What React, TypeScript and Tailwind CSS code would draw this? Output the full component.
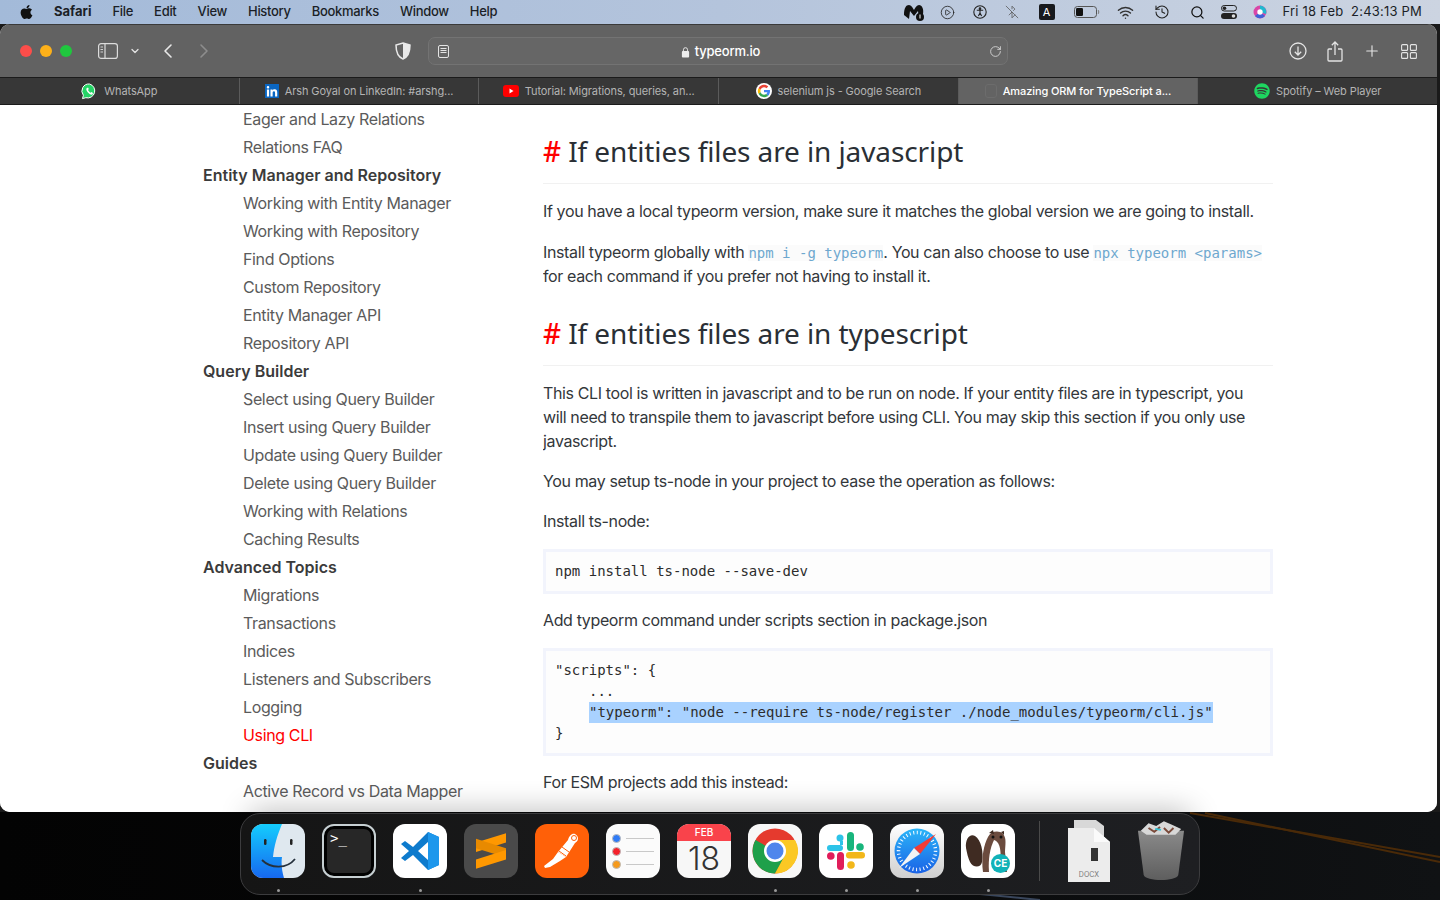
import React from 'react';
import { ChevronDown, ChevronLeft, ChevronRight, Plus, RotateCw, Search, History, BluetoothOff, CirclePlay, Wifi } from 'lucide-react';
import { FaApple, FaSpotify, FaLinkedinIn } from 'react-icons/fa';

const menuItems = ['File', 'Edit', 'View', 'History', 'Bookmarks', 'Window', 'Help'];

const sidebar: { label: string; kind: 'group' | 'item' | 'active' }[] = [
  { label: 'Eager and Lazy Relations', kind: 'item' },
  { label: 'Relations FAQ', kind: 'item' },
  { label: 'Entity Manager and Repository', kind: 'group' },
  { label: 'Working with Entity Manager', kind: 'item' },
  { label: 'Working with Repository', kind: 'item' },
  { label: 'Find Options', kind: 'item' },
  { label: 'Custom Repository', kind: 'item' },
  { label: 'Entity Manager API', kind: 'item' },
  { label: 'Repository API', kind: 'item' },
  { label: 'Query Builder', kind: 'group' },
  { label: 'Select using Query Builder', kind: 'item' },
  { label: 'Insert using Query Builder', kind: 'item' },
  { label: 'Update using Query Builder', kind: 'item' },
  { label: 'Delete using Query Builder', kind: 'item' },
  { label: 'Working with Relations', kind: 'item' },
  { label: 'Caching Results', kind: 'item' },
  { label: 'Advanced Topics', kind: 'group' },
  { label: 'Migrations', kind: 'item' },
  { label: 'Transactions', kind: 'item' },
  { label: 'Indices', kind: 'item' },
  { label: 'Listeners and Subscribers', kind: 'item' },
  { label: 'Logging', kind: 'item' },
  { label: 'Using CLI', kind: 'active' },
  { label: 'Guides', kind: 'group' },
  { label: 'Active Record vs Data Mapper', kind: 'item' },
];

const GoogleIcon = () => (
  <svg width="16" height="16" viewBox="0 0 48 48">
    <circle cx="24" cy="24" r="24" fill="#fff" />
    <path fill="#EA4335" d="M24 13c3 0 5.400 1 7.300 2.800l5.400-5.400C33.400 7.400 29.100 5.500 24 5.500c-7.300 0-13.500 4.200-16.500 10.200l6.300 4.900C15.300 16.200 19.300 13 24 13z" />
    <path fill="#4285F4" d="M42 24.500c0-1.300-.1-2.500-.3-3.700H24v7h10.100c-.4 2.300-1.700 4.300-3.700 5.600l6 4.700C40 34.900 42 30.100 42 24.500z" />
    <path fill="#FBBC05" d="M13.800 27.400c-.8-2.300-.8-4.600 0-6.800l-6.300-4.900c-2.700 5.300-2.700 11.300 0 16.600z" />
    <path fill="#34A853" d="M24 42.500c5 0 9.200-1.600 12.400-4.500l-6-4.700c-1.700 1.100-3.800 1.800-6.400 1.800-4.700 0-8.700-3.200-10.200-7.600l-6.300 4.900c3 6 9.200 10.100 16.500 10.100z" />
  </svg>
);

const WhatsAppIcon = () => (
  <svg width="17" height="17" viewBox="0 0 17 17">
    <path d="M8.500 1 A7 7 0 1 1 4.800 14.700 L1.500 15.600 L2.400 12.300 A7 7 0 0 1 8.500 1 Z" fill="#25d366" stroke="#fff" strokeWidth="1" />
    <path d="M6 5 C5 5.500 5 7 6.500 9 C8 11 10 12 11.500 11.500 L12 10 L10.500 9 L9.500 9.800 C8.500 9.300 7.500 8 7 7 L7.800 6 L7 4.500 Z" fill="#fff" />
  </svg>
);

const Tab = ({ label, icon, active }: { label: string; icon?: React.ReactNode; active?: boolean }) => (
  <div className={`flex flex-1 items-center justify-center gap-[6px] border-r border-[#5b5b5b] last:border-r-0 ${active ? 'bg-[#636363] font-medium text-white' : 'text-[#b4b4b4]'}`}>
    {icon}
    <span className="text-[11px] tracking-[-0.1px]">{label}</span>
  </div>
);

const MenuBar = () => (
  <div className="flex h-[24px] shrink-0 items-center justify-between bg-gradient-to-r from-[#a3bad9] via-[#b4c4dc] to-[#ccd4e1] pl-[19px] pr-[18px] text-[13px] text-[#1b1f27]">
    <div className="flex items-center">
      <FaApple className="h-[16px] w-[15px] text-[#111]" />
      <span className="ml-[20px] font-bold">Safari</span>
      <div className="ml-[21px] flex gap-[21px] font-medium tracking-[-0.3px]">
        {menuItems.map(m => <span key={m}>{m}</span>)}
      </div>
    </div>
    <div className="flex items-center">
      <svg width="22" height="18" viewBox="0 0 22 18" className="mr-[15px]">
        <path d="M1 12 C1 5 3 2 6 2 C8 2 10 5 11 7 C12 5 14 2 16 2 C19 2 21 6 20 11 L16 16 L15 8 L11 13 L7 8 L6 16 Z" fill="#111" />
        <circle cx="17" cy="14" r="4" fill="#111" />
        <rect x="16.500" y="11.500" width="1" height="4" fill="#fff" />
      </svg>
      <CirclePlay size={15} strokeWidth={1.3} className="mr-[18px] text-[#222]" />
      <svg width="14" height="14" viewBox="0 0 14 14" fill="none" stroke="#222" strokeWidth="1.100" className="mr-[18px]">
        <circle cx="7" cy="7" r="6.200" />
        <circle cx="7" cy="3.700" r=".8" fill="#222" />
        <path d="M3.800 5.200 H10.200 M7 5.200 V8 M7 8 L5.400 11 M7 8 L8.600 11" />
      </svg>
      <BluetoothOff size={14} strokeWidth={1.3} className="mr-[20px] text-[#555]" />
      <div className="mr-[19px] flex h-[16px] w-[16px] items-center justify-center rounded-[2px] bg-[#17191d] text-[11px] text-white">A</div>
      <svg width="26" height="12" viewBox="0 0 26 12" className="mr-[17px]">
        <rect x=".5" y=".5" width="22" height="11" rx="3" fill="none" stroke="#555" />
        <rect x="2" y="2" width="7" height="8" rx="1.200" fill="#111" />
        <path d="M24 4 C25 4.500 25 7.500 24 8" stroke="#777" fill="none" />
      </svg>
      <Wifi size={17} strokeWidth={2} className="mr-[20px] text-[#333]" />
      <History size={16} strokeWidth={1.6} className="mr-[20px] text-[#222]" />
      <Search size={15} strokeWidth={2} className="mr-[16px] text-[#111]" />
      <svg width="16" height="14" viewBox="0 0 16 14" className="mr-[16px]">
        <rect x=".5" y=".5" width="15" height="5.500" rx="2.700" fill="none" stroke="#222" />
        <circle cx="3.500" cy="3.200" r="1.800" fill="#222" />
        <rect x="0" y="8" width="16" height="6" rx="3" fill="#222" />
        <circle cx="12.500" cy="11" r="1.800" fill="#ddd" />
      </svg>
      <svg width="14" height="14" viewBox="0 0 14 14" className="mr-[16px]">
        <circle cx="7" cy="7" r="6.500" fill="#d946a8" />
        <path d="M7 .5 A6.500 6.500 0 0 1 13 9 L7 7 Z" fill="#22b8cf" />
        <path d="M2 11 A6.500 6.500 0 0 0 12 11 L7 7 Z" fill="#3f63d8" />
        <circle cx="7" cy="7" r="2.700" fill="#fff" />
      </svg>
      <span className="tracking-[0.2px]">Fri 18 Feb&nbsp;&nbsp;2:43:13 PM</span>
    </div>
  </div>
);

const Toolbar = () => (
  <div className="flex h-[53px] shrink-0 items-center border-t border-[#3a3a3a] bg-[#626262] text-[#e4e4e4]">
    <div className="ml-[20px] flex gap-[8px]">
      <span className="h-[12px] w-[12px] rounded-full bg-[#fc4d4a]" />
      <span className="h-[12px] w-[12px] rounded-full bg-[#fdb019]" />
      <span className="h-[12px] w-[12px] rounded-full bg-[#1fc73e]" />
    </div>
    <svg width="20" height="16" viewBox="0 0 20 16" fill="none" stroke="#dcdcdc" strokeWidth="1.200" className="ml-[26px]">
      <rect x=".6" y=".6" width="18.800" height="14.800" rx="2.500" />
      <path d="M7 .6 V15.400" />
      <path d="M2.500 4 H5 M2.500 6.500 H5 M2.500 9 H5" strokeWidth=".9" />
    </svg>
    <ChevronDown size={12} strokeWidth={2.5} className="ml-[11px] text-[#e4e4e4]" />
    <ChevronLeft size={24} strokeWidth={1.6} className="ml-[15px] text-[#e8e8e8]" />
    <ChevronRight size={24} strokeWidth={1.6} className="ml-[12px] text-[#8d8d8d]" />
    <svg width="16" height="18" viewBox="0 0 16 18" className="ml-[179px]">
      <path d="M8 1 L15 3 C15 10 13 15 8 17 C3 15 1 10 1 3 Z" fill="none" stroke="#e8e8e8" strokeWidth="1.500" />
      <path d="M8 1 L15 3 C15 10 13 15 8 17 Z" fill="#e8e8e8" />
    </svg>
    <div className="ml-[17px] flex h-[28px] w-[580px] items-center justify-between rounded-[7px] border border-[#737373] bg-[#666666] pl-[9px] pr-[5px]">
      <svg width="11" height="13" viewBox="0 0 11 13" fill="none" stroke="#e4e4e4" strokeWidth="1">
        <rect x=".5" y=".5" width="10" height="12" rx="1.500" />
        <path d="M2.500 3.500 H8.500 M2.500 5.500 H8.500 M2.500 7.500 H8.500" />
      </svg>
      <div className="ml-[3px] flex items-center gap-[5px] pt-[1px] text-[13px] font-medium tracking-[-0.2px] text-white">
        <svg width="9" height="12" viewBox="0 0 10 12">
          <rect x="1" y="5" width="8" height="7" rx="1" fill="#eee" />
          <path d="M2.700 5 V3.500 A2.300 2.300 0 0 1 7.300 3.500 V5" fill="none" stroke="#eee" />
        </svg>
        typeorm.io
      </div>
      <RotateCw size={13} strokeWidth={1.5} className="text-[#e0e0e0]" />
    </div>
    <div className="ml-[281px] flex items-center gap-[20px]">
      <svg width="18" height="18" viewBox="0 0 18 18" fill="none" stroke="#e4e4e4" strokeWidth="1.300">
        <circle cx="9" cy="9" r="8" />
        <path d="M9 4.500 V13 M5.800 9.800 L9 13 L12.200 9.800" />
      </svg>
      <svg width="16" height="21" viewBox="0 0 16 21" fill="none" stroke="#e4e4e4" strokeWidth="1.300">
        <path d="M5 8 H2 A1 1 0 0 0 1 9 V19 A1 1 0 0 0 2 20 H14 A1 1 0 0 0 15 19 V9 A1 1 0 0 0 14 8 H11" />
        <path d="M8 14 V1 M4.800 4.200 L8 1 L11.200 4.200" />
      </svg>
      <Plus size={18} strokeWidth={1.5} className="text-[#e4e4e4]" />
      <svg width="16" height="15" viewBox="0 0 16 15" fill="none" stroke="#e4e4e4" strokeWidth="1.100">
        <rect x=".6" y=".6" width="6" height="5.800" rx="1" />
        <rect x="9.400" y=".6" width="6" height="5.800" rx="1" />
        <rect x=".6" y="8.600" width="6" height="5.800" rx="1" />
        <rect x="9.400" y="8.600" width="6" height="5.800" rx="1" />
      </svg>
    </div>
  </div>
);

const TabBar = () => (
  <div className="flex h-[28px] shrink-0 border-y border-[#1b1b1b] bg-[#373737]">
    <Tab label="WhatsApp" icon={<WhatsAppIcon />} />
    <Tab
      label="Arsh Goyal on LinkedIn: #arshg..."
      icon={
        <span className="flex h-[14px] w-[14px] items-end justify-center bg-[#0a66c2]">
          <FaLinkedinIn size={12} className="text-white" />
        </span>
      }
    />
    <Tab
      label="Tutorial: Migrations, queries, an..."
      icon={
        <svg width="16" height="12" viewBox="0 0 16 12">
          <rect width="16" height="12" rx="3" fill="#f00" />
          <path d="M6.500 3.500 L10.500 6 L6.500 8.500 Z" fill="#fff" />
        </svg>
      }
    />
    <Tab label="selenium js - Google Search" icon={<GoogleIcon />} />
    <Tab label="Amazing ORM for TypeScript a..." active icon={<span className="h-[14px] w-[12px] rounded-[3px] border border-[#6c6c6c]" />} />
    <Tab label="Spotify – Web Player" icon={<FaSpotify size={16} className="text-[#1ed760]" />} />
  </div>
);

const Sidebar = () => (
  <div className="w-[543px] shrink-0 overflow-hidden pl-[203px] font-[Inter,sans-serif] text-[16px]">
    {sidebar.map(s => (
      <div
        key={s.label}
        className={`h-[28px] leading-[28px] ${s.kind === 'group' ? 'font-semibold text-[#3b3b3b]' : s.kind === 'active' ? 'pl-[40px] tracking-[-0.36px] text-[#f00]' : 'pl-[40px] tracking-[-0.36px] text-[#5b5b5b]'}`}
      >
        {s.label}
      </div>
    ))}
  </div>
);

const Heading = ({ children }: { children: React.ReactNode }) => (
  <h2 className="border-b border-[#f1f1f1] pb-[14px] font-['Noto_Sans',sans-serif] text-[28px] leading-[36px] tracking-[-0.1px] text-[#2a2f35]">
    <span className="font-medium text-[#f00]">#</span> {children}
  </h2>
);

const Code = ({ children }: { children: React.ReactNode }) => (
  <code className="bg-[#fbfbfb] font-['DejaVu_Sans_Mono',monospace] text-[14px] leading-none tracking-normal text-[#6ea8cf]">{children}</code>
);

const Pre = ({ children }: { children: React.ReactNode }) => (
  <pre className="mt-[16px] border-[3px] border-[#f2f4fc] bg-[#fdfdfd] px-[9px] py-[9px] font-['DejaVu_Sans_Mono',monospace] text-[14px] leading-[21px] tracking-normal text-[#2c2c2c]">{children}</pre>
);

const Article = () => (
  <div className="w-[730px] shrink-0 overflow-hidden pt-[28px] font-[Inter,sans-serif] text-[16px] leading-[24px] tracking-[-0.37px] text-[#33373b]">
    <Heading>If entities files are in javascript</Heading>
    <p className="mt-[15px]">If you have a local typeorm version, make sure it matches the global version we are going to install.</p>
    <p className="mt-[17px]">
      Install typeorm globally with <Code>npm i -g typeorm</Code>. You can also choose to use <Code>npx typeorm &lt;params&gt;</Code> for each command if you prefer not having to install it.
    </p>
    <div className="mt-[27px]">
      <Heading>If entities files are in typescript</Heading>
    </div>
    <p className="mt-[15px] pr-[20px]">
      This CLI tool is written in javascript and to be run on node. If your entity files are in typescript, you will need to transpile them to javascript before using CLI. You may skip this section if you only use javascript.
    </p>
    <p className="mt-[16px]">You may setup ts-node in your project to ease the operation as follows:</p>
    <p className="mt-[16px]">Install ts-node:</p>
    <Pre>npm install ts-node --save-dev</Pre>
    <p className="mt-[14px]">Add typeorm command under scripts section in package.json</p>
    <Pre>
      <div>{'"scripts": {'}</div>
      <div className="pl-[34px]">...</div>
      <div className="pl-[34px]">
        <span className="inline-block bg-[#a9d2ff]">{'"typeorm": "node --require ts-node/register ./node_modules/typeorm/cli.js"'}</span>
      </div>
      <div>{'}'}</div>
    </Pre>
    <p className="mt-[14px]">For ESM projects add this instead:</p>
  </div>
);

const tile = 'flex h-[54px] w-[54px] shrink-0 items-center justify-center overflow-hidden rounded-[12px]';

const Dock = () => (
  <div className="relative flex h-[88px] shrink-0 justify-center bg-gradient-to-r from-[#030303] via-[#08090a] to-[#101214] pt-[1px]">
    {/* wallpaper streaks */}
    <svg className="absolute inset-0" width="1440" height="88" viewBox="0 0 1440 88" fill="none">
      <path d="M1190 1 L1440 45" stroke="#4a2a08" strokeWidth="2" />
      <path d="M1205 1 L1440 50" stroke="#4a2a08" strokeWidth="2" />
      <path d="M980 82 L1040 88" stroke="#39465c" strokeWidth="2" />
    </svg>
    <div className="relative flex h-[82px] w-[960px] items-center rounded-[20px] border border-[#3c3c3e] bg-gradient-to-r from-[#151515] to-[#1e1f22] pb-[6px] pl-[10px]">
      <div className="flex gap-[17px]">
        <svg width="54" height="54" viewBox="0 0 54 54">
          <defs>
            <linearGradient id="fb" x1="0" y1="0" x2="0" y2="1"><stop offset="0" stopColor="#14cdfd" /><stop offset="1" stopColor="#1668f0" /></linearGradient>
          </defs>
          <rect width="54" height="54" rx="12" fill="#dfe8ef" />
          <path d="M12 0 H31 C26 12 23 22 22 33 H31 C30 40 31 47 33 54 H12 A12 12 0 0 1 0 42 V12 A12 12 0 0 1 12 0 Z" fill="url(#fb)" />
          <rect x="13" y="15" width="2.500" height="6" rx="1.200" fill="#222" />
          <rect x="39" y="15" width="2.500" height="6" rx="1.200" fill="#222" />
          <path d="M11 36 C20 45 36 45 44 35" fill="none" stroke="#25303c" strokeWidth="1.800" />
        </svg>
        <div className={`${tile} border-[2px] border-[#c6cfd2] bg-black p-[3px]`}>
          <div className="h-full w-full rounded-[7px] bg-[#272727] pl-[3px] pt-[2px] font-['DejaVu_Sans_Mono',monospace] text-[14px] leading-[14px] text-white">&gt;_</div>
        </div>
        <div className={`${tile} bg-white`}>
          <svg width="40" height="40" viewBox="0 0 40 40">
            <path d="M28 1 L39 6 V34 L28 39 L13 24 L5 30 L1 27 L9 20 L1 13 L5 10 L13 16 Z M28 11 L18 20 L28 29 Z" fill="#0e7bcd" fillRule="evenodd" />
            <path d="M28 1 L39 6 V34 L28 39 Z" fill="#1d97ec" />
          </svg>
        </div>
        <div className={`${tile} bg-[#4a4a4a]`}>
          <svg width="30" height="38" viewBox="0 0 32 38">
            <path d="M32 0 V10 L0 20 V10 Z" fill="#ff9800" />
            <path d="M0 16 L32 26 V16 L0 6 Z" fill="#e88a00" />
            <path d="M32 18 V28 L0 38 V28 Z" fill="#ff9800" />
          </svg>
        </div>
        <div className={`${tile} bg-[#ff6008]`}>
          <svg width="40" height="40" viewBox="0 0 40 40">
            <path d="M33 3 C37 5 37 10 33 12 L24 26 L16 21 L26 9 C27 5 30 2 33 3 Z" fill="#fff" />
            <path d="M16 21 L24 26 L18 30 L8 36 L3 37 L2 35 L11 28 Z" fill="#fff" />
            <path d="M20 16 L27 21 M17 20 L24 25" stroke="#ff6008" strokeWidth="1" />
            <circle cx="32" cy="7" r="2.500" fill="none" stroke="#ff6008" strokeWidth="1" />
          </svg>
        </div>
        <div className={`${tile} flex-col gap-[4px] bg-[#fbfbfb]`}>
          {['#2f7bf6', '#f5212b', '#f59a1c'].map(c => (
            <div key={c} className="flex items-center gap-[5px]">
              <div className="flex h-[9px] w-[9px] items-center justify-center rounded-full border border-[#bbb]" style={{ backgroundColor: c }} />
              <div className="h-[1px] w-[28px] bg-[#c9c9c9]" />
            </div>
          ))}
        </div>
        <div className={`${tile} flex-col justify-start bg-[#f7f7f7]`}>
          <div className="flex h-[17px] w-full shrink-0 items-center justify-center bg-[#f9434b] font-[Inter,sans-serif] text-[10px] font-medium text-white">FEB</div>
          <div className="font-[Inter,sans-serif] text-[32px] font-light leading-[36px] text-[#333]">18</div>
        </div>
        <div className={`${tile} bg-[#f7f7f7]`}>
          <svg width="46" height="46" viewBox="0 0 46 46">
            <circle cx="23" cy="23" r="22.500" fill="#e53a2e" />
            <path d="M23 23 L3.500 12 A22.500 22.500 0 0 0 23 45.500 L34 27 Z" fill="#1fa04a" />
            <path d="M23 12 H43 A22.500 22.500 0 0 1 23 45.500 L33 27 Z" fill="#fbc824" />
            <circle cx="23" cy="23" r="11" fill="#fff" />
            <circle cx="23" cy="23" r="8.500" fill="#4f86ec" />
          </svg>
        </div>
        <div className={`${tile} bg-white`}>
          <svg width="38" height="38" viewBox="0 0 38 38">
            <rect x="0" y="13" width="16" height="6" rx="3" fill="#2dc3e8" />
            <circle cx="13" cy="6" r="3.500" fill="#2dc3e8" />
            <rect x="13" y="9" width="3" height="4" fill="#2dc3e8" />
            <rect x="20" y="0" width="7" height="19" rx="3.500" fill="#18b57c" />
            <circle cx="33" cy="15" r="3.800" fill="#18b57c" />
            <rect x="19" y="20" width="19" height="6.500" rx="3.200" fill="#f2b71a" />
            <circle cx="24" cy="33" r="3.800" fill="#f2b71a" />
            <rect x="10" y="20" width="7" height="18" rx="3.500" fill="#e01d5a" />
            <circle cx="3.800" cy="24" r="3.800" fill="#e01d5a" />
          </svg>
        </div>
        <div className={`${tile} bg-gradient-to-b from-white to-[#cfcfcf]`}>
          <svg width="46" height="46" viewBox="0 0 46 46">
            <defs>
              <linearGradient id="sf" x1="0" y1="0" x2="0" y2="1"><stop offset="0" stopColor="#2bb5f8" /><stop offset="1" stopColor="#1a62e6" /></linearGradient>
            </defs>
            <circle cx="23" cy="23" r="22.500" fill="url(#sf)" />
            <circle cx="23" cy="23" r="18.500" fill="none" stroke="#fff" strokeWidth="3.500" strokeDasharray="1 2.600" />
            <path d="M42 6 L20 20 L26 26 Z" fill="#f23c36" />
            <path d="M5 40 L20 20 L26 26 Z" fill="#f4f4f4" />
          </svg>
        </div>
        <div className={`${tile} relative bg-white`}>
          <svg width="54" height="54" viewBox="0 0 54 54">
            <path d="M5 24 C4 15 9 9 14 12 C20 16 23 28 21 38 C20 44 12 44 9 38 C7 34 6 29 5 24 Z" fill="#3f2b22" />
            <path d="M22 48 C20 34 23 20 27 13 C30 7 38 6 42 10 C46 14 44 22 44 28 L46 48 Z" fill="#6b4b3e" />
            <path d="M33 16 C40 18 41 30 38 48 H28 C27 35 29 24 33 16 Z" fill="#fff" />
            <path d="M28 9 L32 6 L33 10 Z M40 8 L43 7 L43 11 Z" fill="#3f2b22" />
            <circle cx="32" cy="13" r="1.500" fill="#111" />
            <circle cx="40" cy="13" r="1.500" fill="#111" />
          </svg>
          <div className="absolute bottom-[5px] right-[5px] flex h-[19px] w-[19px] items-center justify-center rounded-full bg-[#11b2b8] font-[Inter,sans-serif] text-[10px] font-bold text-white">CE</div>
        </div>
      </div>
      <div className="ml-[24px] h-[60px] w-[1px] bg-[#4a4a4a]" />
      <div className="relative ml-[28px] h-[62px] w-[42px]">
        <svg width="42" height="62" viewBox="0 0 42 62" className="absolute inset-0">
          <path d="M6 0 H28 L36 6 V20 H6 Z" fill="#d8d8d8" />
          <path d="M0 8 H26 L42 22 V62 H0 Z" fill="#ececec" />
          <path d="M26 8 V22 H42 Z" fill="#fafafa" />
          <rect x="23" y="28" width="7" height="13" fill="#333" />
        </svg>
        <span className="absolute bottom-[2px] left-0 w-full text-center font-[Inter,sans-serif] text-[7px] text-[#777]">DOCX</span>
      </div>
      <svg width="48" height="62" viewBox="0 0 50 62" className="ml-[27px]">
        <defs>
          <linearGradient id="tr" x1="0" y1="0" x2="0" y2="1"><stop offset="0" stopColor="#8a8a8a" /><stop offset="1" stopColor="#5e5e5e" /></linearGradient>
        </defs>
        <path d="M1 10 H49 L43 56 C41 63 9 63 7 56 Z" fill="url(#tr)" />
        <path d="M4 10 L12 2 L20 5 L28 0 L37 4 L46 8 L40 14 H10 Z" fill="#d8d8d8" />
        <path d="M12 7 L18 11 L24 6 M28 7 L33 12 L38 7" stroke="#7a4a3a" strokeWidth="2" fill="none" />
        <path d="M19 8 L25 9" stroke="#35c4d8" strokeWidth="2" />
      </svg>
      <div className="absolute bottom-[2px] left-[36px] h-[3px] w-[3px] rounded-full bg-[#9a9a9a]" />
      <div className="absolute bottom-[2px] left-[178px] h-[3px] w-[3px] rounded-full bg-[#9a9a9a]" />
      <div className="absolute bottom-[2px] left-[533px] h-[3px] w-[3px] rounded-full bg-[#9a9a9a]" />
      <div className="absolute bottom-[2px] left-[604px] h-[3px] w-[3px] rounded-full bg-[#9a9a9a]" />
      <div className="absolute bottom-[2px] left-[675px] h-[3px] w-[3px] rounded-full bg-[#9a9a9a]" />
      <div className="absolute bottom-[2px] left-[746px] h-[3px] w-[3px] rounded-full bg-[#9a9a9a]" />
    </div>
  </div>
);

export default function App() {
  return (
    <div className="flex h-[900px] w-[1440px] flex-col overflow-hidden bg-[#050505] font-[Inter,sans-serif]">
      <MenuBar />
      <div className="flex h-[788px] shrink-0 bg-[#1a1a1a]">
        <div className="flex w-[1437px] flex-col overflow-hidden rounded-[10px] bg-white">
          <Toolbar />
          <TabBar />
          <div className="relative flex min-h-0 flex-1 overflow-hidden bg-white">
            <Sidebar />
            <Article />
            {/* the dock's shadow falling on the page */}
            <div className="absolute bottom-[-24px] left-[250px] h-[24px] w-[940px] shadow-[0_0_30px_rgba(0,0,0,0.3)]" />
          </div>
        </div>
      </div>
      <Dock />
    </div>
  );
}
